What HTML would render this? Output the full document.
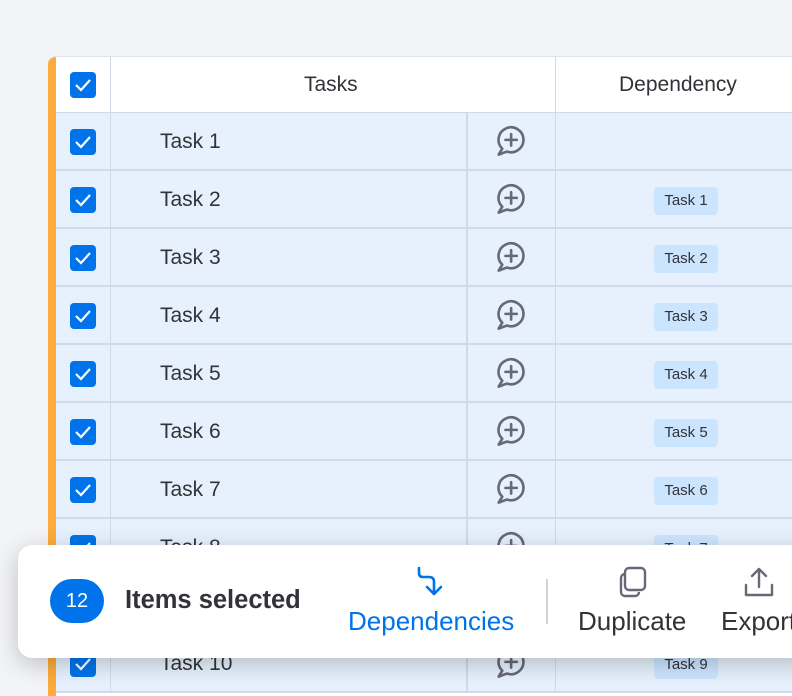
<!DOCTYPE html>
<html><head><meta charset="utf-8"><style>
*{margin:0;padding:0;box-sizing:border-box}
body{width:792px;height:686px;overflow:hidden;background:#f3f4f6;font-family:"Liberation Sans",sans-serif;position:relative;color:#323338}
.tbl{position:absolute;left:48px;top:56px;width:760px;height:640px;background:#fff;border-top-left-radius:8px;overflow:hidden;border-top:1px solid #dfe3ea}
.bar{position:absolute;left:0;top:0;width:8px;height:100%;background:#fdab3d}
.hdr{position:absolute;left:8px;top:0;right:0;height:56px;background:#fff;border-bottom:1px solid #d0d9ea}
.row{position:absolute;left:8px;right:0;height:58px;background:#e6f1fd;border-bottom:2px solid #d0d9ea}
.cb{position:absolute;left:14px;width:26px;height:26px;background:#0073ea;border-radius:4px}
.cb svg{position:absolute;left:4px;top:5px}
.v1{position:absolute;left:54px;top:0;bottom:0;width:1px;background:#d0d9ea}
.v2{position:absolute;left:410px;top:0;bottom:0;width:2px;background:#d0d9ea}
.v3{position:absolute;left:499px;top:0;bottom:0;width:1px;background:#d0d9ea}
.t{position:absolute;left:104px;top:17px;font-size:21px}
.ic{position:absolute;left:437px;top:11px}
.tag{position:absolute;left:598px;top:16px;width:64px;height:28px;background:#cce5ff;border-radius:4px;font-size:15px;text-align:center;line-height:28px}
.tb{position:absolute;left:18px;top:545px;width:800px;height:113px;background:#fff;border-radius:14px;box-shadow:0 6px 24px rgba(0,0,0,.22)}
</style></head><body>
<div class="tbl"><div class="bar"></div>
<div class="hdr"><div class="cb" style="top:15px"><svg width="18" height="16"><path d="M2 8l5 5 9-10" stroke="#fff" stroke-width="2.2" fill="none"/></svg></div><div class="v1"></div><div class="v3"></div>
<div style="position:absolute;left:248px;top:16px;font-size:21px">Tasks</div>
<div style="position:absolute;left:563px;top:16px;font-size:21px">Dependency</div></div>
<svg width="0" height="0" style="position:absolute"><defs><symbol id="pb" viewBox="0 0 30 30"><path d="M8.2 21.8 A11 11 0 1 1 12.2 24.3 L5 27 Z" fill="none" stroke="#676879" stroke-width="2.3" stroke-linejoin="round"/><path d="M16 9v10M11 14h10" stroke="#676879" stroke-width="2.3" stroke-linecap="round"/></symbol></defs></svg>
<div class="row" style="top:56px"><div class="cb" style="top:16px"><svg width="18" height="16"><path d="M2 8l5 5 9-10" stroke="#fff" stroke-width="2.2" fill="none"/></svg></div><div class="v1"></div><div class="v2"></div><div class="v3"></div><div class="t">Task 1</div><svg class="ic" width="34" height="34"><use href="#pb"/></svg></div>
<div class="row" style="top:114px"><div class="cb" style="top:16px"><svg width="18" height="16"><path d="M2 8l5 5 9-10" stroke="#fff" stroke-width="2.2" fill="none"/></svg></div><div class="v1"></div><div class="v2"></div><div class="v3"></div><div class="t">Task 2</div><svg class="ic" width="34" height="34"><use href="#pb"/></svg><div class="tag">Task 1</div></div>
<div class="row" style="top:172px"><div class="cb" style="top:16px"><svg width="18" height="16"><path d="M2 8l5 5 9-10" stroke="#fff" stroke-width="2.2" fill="none"/></svg></div><div class="v1"></div><div class="v2"></div><div class="v3"></div><div class="t">Task 3</div><svg class="ic" width="34" height="34"><use href="#pb"/></svg><div class="tag">Task 2</div></div>
<div class="row" style="top:230px"><div class="cb" style="top:16px"><svg width="18" height="16"><path d="M2 8l5 5 9-10" stroke="#fff" stroke-width="2.2" fill="none"/></svg></div><div class="v1"></div><div class="v2"></div><div class="v3"></div><div class="t">Task 4</div><svg class="ic" width="34" height="34"><use href="#pb"/></svg><div class="tag">Task 3</div></div>
<div class="row" style="top:288px"><div class="cb" style="top:16px"><svg width="18" height="16"><path d="M2 8l5 5 9-10" stroke="#fff" stroke-width="2.2" fill="none"/></svg></div><div class="v1"></div><div class="v2"></div><div class="v3"></div><div class="t">Task 5</div><svg class="ic" width="34" height="34"><use href="#pb"/></svg><div class="tag">Task 4</div></div>
<div class="row" style="top:346px"><div class="cb" style="top:16px"><svg width="18" height="16"><path d="M2 8l5 5 9-10" stroke="#fff" stroke-width="2.2" fill="none"/></svg></div><div class="v1"></div><div class="v2"></div><div class="v3"></div><div class="t">Task 6</div><svg class="ic" width="34" height="34"><use href="#pb"/></svg><div class="tag">Task 5</div></div>
<div class="row" style="top:404px"><div class="cb" style="top:16px"><svg width="18" height="16"><path d="M2 8l5 5 9-10" stroke="#fff" stroke-width="2.2" fill="none"/></svg></div><div class="v1"></div><div class="v2"></div><div class="v3"></div><div class="t">Task 7</div><svg class="ic" width="34" height="34"><use href="#pb"/></svg><div class="tag">Task 6</div></div>
<div class="row" style="top:462px"><div class="cb" style="top:16px"><svg width="18" height="16"><path d="M2 8l5 5 9-10" stroke="#fff" stroke-width="2.2" fill="none"/></svg></div><div class="v1"></div><div class="v2"></div><div class="v3"></div><div class="t">Task 8</div><svg class="ic" width="34" height="34"><use href="#pb"/></svg><div class="tag">Task 7</div></div>
<div class="row" style="top:520px"><div class="cb" style="top:16px"></div><div class="v1"></div><div class="v2"></div><div class="v3"></div><div class="t">Task 9</div><div class="tag">Task 8</div></div>
<div class="row" style="top:578px"><div class="cb" style="top:16px"><svg width="18" height="16"><path d="M2 8l5 5 9-10" stroke="#fff" stroke-width="2.2" fill="none"/></svg></div><div class="v1"></div><div class="v2"></div><div class="v3"></div><div class="t">Task 10</div><svg class="ic" width="34" height="34"><use href="#pb"/></svg><div class="tag">Task 9</div></div>
</div>
<div class="tb">
<div style="position:absolute;left:32px;top:34px;width:54px;height:44px;border-radius:22px;background:#0073ea;color:#fff;font-size:20px;text-align:center;line-height:44px">12</div>
<div style="position:absolute;left:107px;top:41px;font-size:25.5px;font-weight:bold;color:#323338">Items selected</div>
<svg style="position:absolute;left:398px;top:21px" width="32" height="32" viewBox="0 0 32 32"><path d="M3 2v5q0 4 4 4h6q5 0 5 5v12M11 21l7 7 7-7" stroke="#0073ea" stroke-width="2.6" fill="none" stroke-linecap="round" stroke-linejoin="round"/></svg>
<div style="position:absolute;left:330px;top:61px;font-size:26px;color:#0073ea">Dependencies</div>
<div style="position:absolute;left:528px;top:34px;width:2px;height:45px;background:#d0d4dc"></div>
<svg style="position:absolute;left:600px;top:20px" width="32" height="34" viewBox="0 0 32 34"><rect x="7" y="3" width="20" height="22" rx="4" fill="none" stroke="#676879" stroke-width="2.4"/><path d="M7 9a4 4 0 0 0-4 4v14a4 4 0 0 0 4 4h10a4 4 0 0 0 4-4" fill="none" stroke="#676879" stroke-width="2.4"/></svg>
<div style="position:absolute;left:560px;top:61px;font-size:26px;color:#323338">Duplicate</div>
<svg style="position:absolute;left:724px;top:20px" width="34" height="34" viewBox="0 0 34 34"><path d="M17 22V4M10 11l7-7 7 7M4 20v10h26V20" fill="none" stroke="#676879" stroke-width="2.4" stroke-linecap="round" stroke-linejoin="round"/></svg>
<div style="position:absolute;left:703px;top:61px;font-size:26px;color:#323338">Export</div>
</div>
</body></html>
